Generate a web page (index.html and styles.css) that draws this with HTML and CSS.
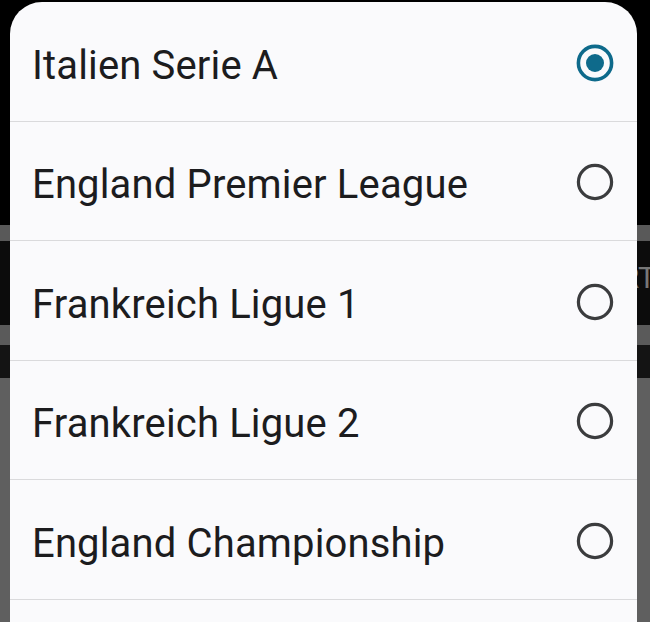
FILE: index.html
```html
<!DOCTYPE html>
<html>
<head>
<meta charset="utf-8">
<link rel="stylesheet" href="styles.css">
</head>
<body>
<div class="backdrop">
  <div class="band band-black"></div>
  <div class="band band-grey1"></div>
  <div class="band band-dark1"><span class="ghost">RT</span></div>
  <div class="band band-grey2"></div>
  <div class="band band-dark2"></div>
  <div class="band band-grey3"></div>
</div>
<div class="sheet">
  <div class="row">
    <span class="label">Italien Serie A</span>
    <svg class="radio" width="38" height="38" viewBox="0 0 38 38"><circle cx="19" cy="19" r="16.6" fill="none" stroke="#0e6a8b" stroke-width="3.6"/><circle cx="19" cy="19" r="9" fill="#0e6a8b"/></svg>
  </div>
  <div class="row">
    <span class="label">England Premier League</span>
    <svg class="radio" width="38" height="38" viewBox="0 0 38 38"><circle cx="19" cy="19" r="16.6" fill="none" stroke="#3b3c3e" stroke-width="3.2"/></svg>
  </div>
  <div class="row">
    <span class="label">Frankreich Ligue 1</span>
    <svg class="radio" width="38" height="38" viewBox="0 0 38 38"><circle cx="19" cy="19" r="16.6" fill="none" stroke="#3b3c3e" stroke-width="3.2"/></svg>
  </div>
  <div class="row">
    <span class="label">Frankreich Ligue 2</span>
    <svg class="radio" width="38" height="38" viewBox="0 0 38 38"><circle cx="19" cy="19" r="16.6" fill="none" stroke="#3b3c3e" stroke-width="3.2"/></svg>
  </div>
  <div class="row">
    <span class="label">England Championship</span>
    <svg class="radio" width="38" height="38" viewBox="0 0 38 38"><circle cx="19" cy="19" r="16.6" fill="none" stroke="#3b3c3e" stroke-width="3.2"/></svg>
  </div>
  <div class="row"></div>
</div>
</body>
</html>
```
FILE: styles.css
```css
html, body {
  margin: 0;
  padding: 0;
  width: 650px;
  height: 622px;
  overflow: hidden;
  background: #000;
  font-family: Roboto, "Noto Sans", sans-serif;
}
.backdrop {
  display: flex;
  flex-direction: column;
  height: 622px;
}
.band { width: 100%; }
.band-black { height: 225px; background: #000; }
.band-grey1 { height: 16px; background: #595959; }
.band-dark1 {
  height: 84px;
  background: #0c0c0c;
  display: flex;
  justify-content: flex-end;
  align-items: center;
}
.ghost {
  color: #777;
  font-size: 30px;
  margin-right: -6px;
  margin-top: -12px;
}
.band-grey2 { height: 20px; background: #5a5a5a; }
.band-dark2 { height: 33px; background: #141414; }
.band-grey3 { flex: 1; background: #5f5f5f; }

.sheet {
  position: absolute;
  left: 10px;
  top: 2px;
  width: 627px;
  bottom: 0;
  overflow: hidden;
  background: #fafafc;
  border-radius: 32px 32px 0 0;
  display: flex;
  flex-direction: column;
}
.row {
  flex: 0 0 118.5px;
  border-bottom: 1px solid #dadadc;
  display: flex;
  align-items: center;
  justify-content: space-between;
  padding: 0 23px 0 22px;
}
.label {
  font-size: 40px;
  color: #1c1c1e;
  letter-spacing: 0.15px;
  padding-top: 8px;
}
.radio {
  display: block;
  flex: none;
  margin-top: 3px;
}
```
